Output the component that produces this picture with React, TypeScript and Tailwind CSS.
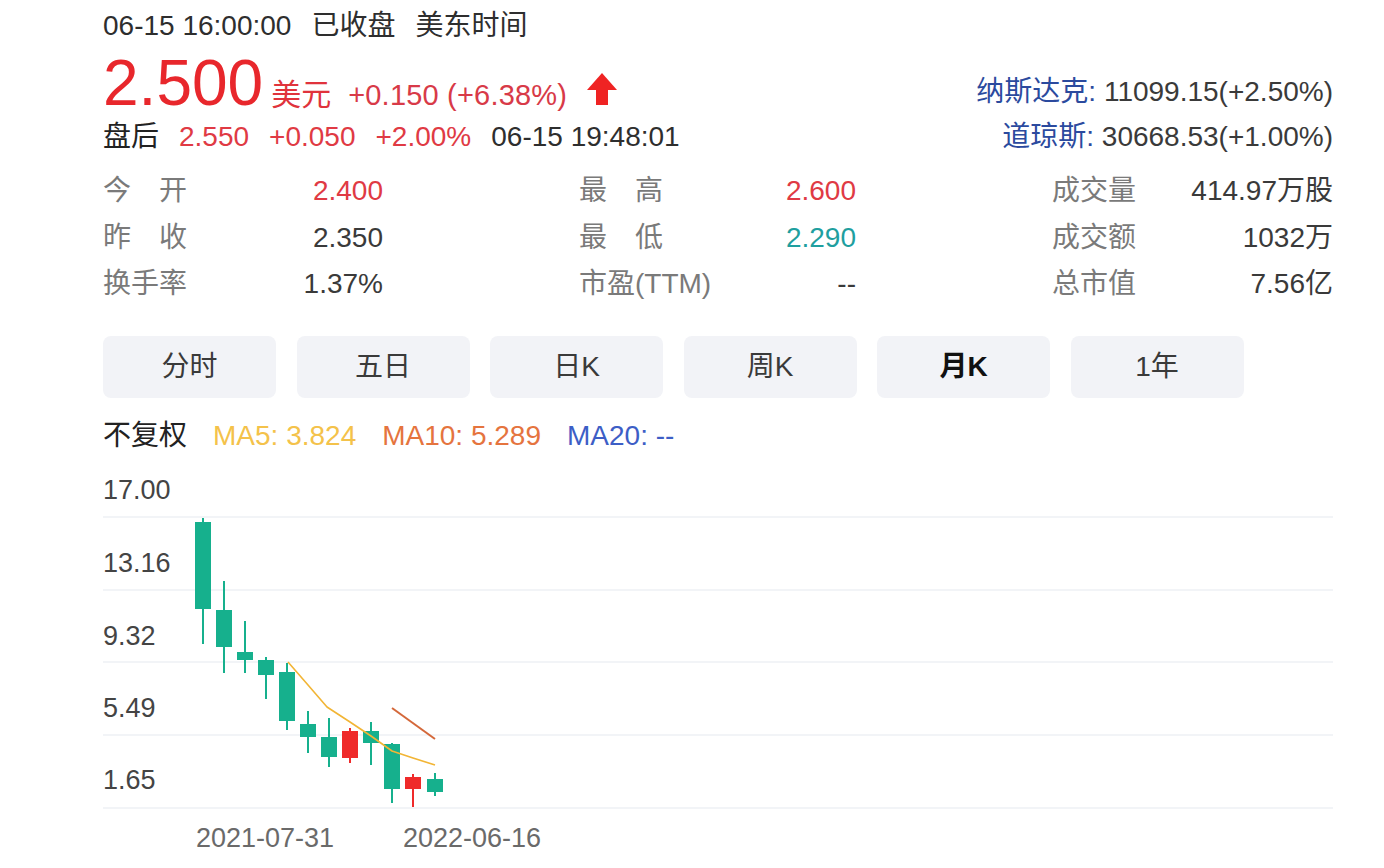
import React from 'react';

const FONT = '"Liberation Sans", "Noto Sans CJK SC", sans-serif';

const stats = [
  [
    { label: '今　开', value: '2.400', color: 'text-[#e03a44]' },
    { label: '最　高', value: '2.600', color: 'text-[#e03a44]' },
    { label: '成交量', value: '414.97万股', color: 'text-[#3a3a3a]' },
  ],
  [
    { label: '昨　收', value: '2.350', color: 'text-[#3a3a3a]' },
    { label: '最　低', value: '2.290', color: 'text-[#1f9f9f]' },
    { label: '成交额', value: '1032万', color: 'text-[#3a3a3a]' },
  ],
  [
    { label: '换手率', value: '1.37%', color: 'text-[#3a3a3a]' },
    { label: '市盈(TTM)', value: '--', color: 'text-[#3a3a3a]' },
    { label: '总市值', value: '7.56亿', color: 'text-[#3a3a3a]' },
  ],
];

const tabs = ['分时', '五日', '日K', '周K', '月K', '1年'];

// candles: center x, body top, body bottom, wick top, wick bottom, rising
const candles: [number, number, number, number, number, boolean][] = [
  [100, 62, 149, 58, 184, false],
  [121, 150, 187, 121, 213, false],
  [142, 192, 200, 161, 213, false],
  [163, 200, 215, 197, 239, false],
  [184, 212, 261, 203, 270, false],
  [205, 264, 277, 251, 293, false],
  [226, 277, 297, 258, 307, false],
  [247, 271, 298, 268, 303, true],
  [268, 271, 283, 262, 305, false],
  [289, 284, 329, 283, 343, false],
  [310, 317, 329, 314, 347, true],
  [332, 319, 332, 313, 336, false],
];

const gridY = [57, 130, 202, 275, 348];
const axis = [
  { y: 39, t: '17.00' },
  { y: 112, t: '13.16' },
  { y: 184.5, t: '9.32' },
  { y: 257, t: '5.49' },
  { y: 329, t: '1.65' },
];

function UpArrow() {
  return (
    <svg width="30" height="32" viewBox="0 0 30 32" className="self-center mt-[8px]">
      <polygon points="0,17 15,0 30,17" fill="#ef2323" />
      <rect x="9" y="16" width="12" height="16" fill="#ef2323" />
    </svg>
  );
}

function KChart() {
  return (
    <svg width="1230" height="408" className="block mt-[2px]" style={{ fontFamily: FONT }}>
      {gridY.map((y) => (
        <line key={y} x1="0" x2="1230" y1={y} y2={y} stroke="#eef0f4" strokeWidth="1.5" />
      ))}
      {axis.map((a) => (
        <text key={a.t} x="0" y={a.y} fontSize="27" fill="#444">{a.t}</text>
      ))}
      {candles.map(([cx, bt, bb, wt, wb, up], i) => {
        const c = up ? '#ef2a2a' : '#16b08d';
        return (
          <g key={i}>
            <rect x={cx - 1} y={wt} width="2" height={wb - wt} fill={c} />
            <rect x={cx - 8} y={bt} width="16" height={bb - bt} fill={c} />
          </g>
        );
      })}
      <polyline
        points="185,202 205,225 224,247 247,262 268,276 289,291 310,298 332,305"
        fill="none"
        stroke="#f2b535"
        strokeWidth="1.6"
        strokeLinejoin="round"
      />
      <line x1="289" y1="248" x2="332" y2="279" stroke="#d4683a" strokeWidth="2" />
      <text x="93" y="387" fontSize="27" fill="#6a6a6a">2021-07-31</text>
      <text x="300" y="387" fontSize="27" fill="#6a6a6a">2022-06-16</text>
    </svg>
  );
}

export default function App() {
  return (
    <div className="w-[1384px] h-[868px] overflow-hidden bg-white pl-[103px] pr-[51px] text-[28px] text-[#3a3a3a]" style={{ fontFamily: FONT }}>
      {/* 时间行 */}
      <div className="flex gap-[20px] h-[52px] leading-[52px] text-[#2e2e2e]">
        <span>06-15 16:00:00</span>
        <span>已收盘</span>
        <span>美东时间</span>
      </div>

      {/* 价格行 */}
      <div className="flex justify-between items-end h-[62px]">
        <div className="flex items-baseline h-[62px]">
          <span className="text-[64px] leading-[62px] text-[#e8272c]">2.500</span>
          <span className="ml-[8px] text-[30px] text-[#e0333c]">美元</span>
          <span className="ml-[17px] text-[29px] tracking-[0.2px] text-[#d83a48]">+0.150 (+6.38%)</span>
          <span className="ml-[20px]"><UpArrow /></span>
        </div>
        <div className="leading-[40px] pb-[2px]">
          <span className="text-[#2b4a9e]">纳斯达克: </span>
          <span>11099.15(+2.50%)</span>
        </div>
      </div>

      {/* 盘后行 */}
      <div className="flex justify-between h-[46px] leading-[46px]">
        <div className="flex gap-[20px]">
          <span className="text-[#222]">盘后</span>
          <span className="text-[#e03a44]">2.550</span>
          <span className="text-[#e03a44]">+0.050</span>
          <span className="text-[#e03a44]">+2.00%</span>
          <span className="text-[#2e2e2e]">06-15 19:48:01</span>
        </div>
        <div>
          <span className="text-[#2b4a9e]">道琼斯: </span>
          <span>30668.53(+1.00%)</span>
        </div>
      </div>

      {/* 行情数据 */}
      <div className="mt-[8px]">
        {stats.map((row, r) => (
          <div key={r} className="grid grid-cols-[280px_277px_281px] justify-between h-[46.5px] leading-[46.5px]">
            {row.map((s) => (
              <div key={s.label} className="flex justify-between">
                <span className="text-[#7a7a7a]">{s.label}</span>
                <span className={s.color}>{s.value}</span>
              </div>
            ))}
          </div>
        ))}
      </div>

      {/* 周期切换 */}
      <div className="flex gap-[20.5px] mt-[28.5px]">
        {tabs.map((t) => (
          <div
            key={t}
            className={`w-[173px] h-[62px] rounded-[8px] bg-[#f2f3f7] flex items-center justify-center ${t === '月K' ? 'font-bold text-[#111]' : 'text-[#3a3a3a]'}`}
          >
            {t}
          </div>
        ))}
      </div>

      {/* 均线 */}
      <div className="flex gap-[26px] mt-[16px] h-[44px] leading-[44px]">
        <span className="text-[#222]">不复权</span>
        <span className="text-[#f4c24a]">MA5: 3.824</span>
        <span className="text-[#e5743e]">MA10: 5.289</span>
        <span className="text-[#3d5ec6]">MA20: --</span>
      </div>

      <KChart />
    </div>
  );
}
